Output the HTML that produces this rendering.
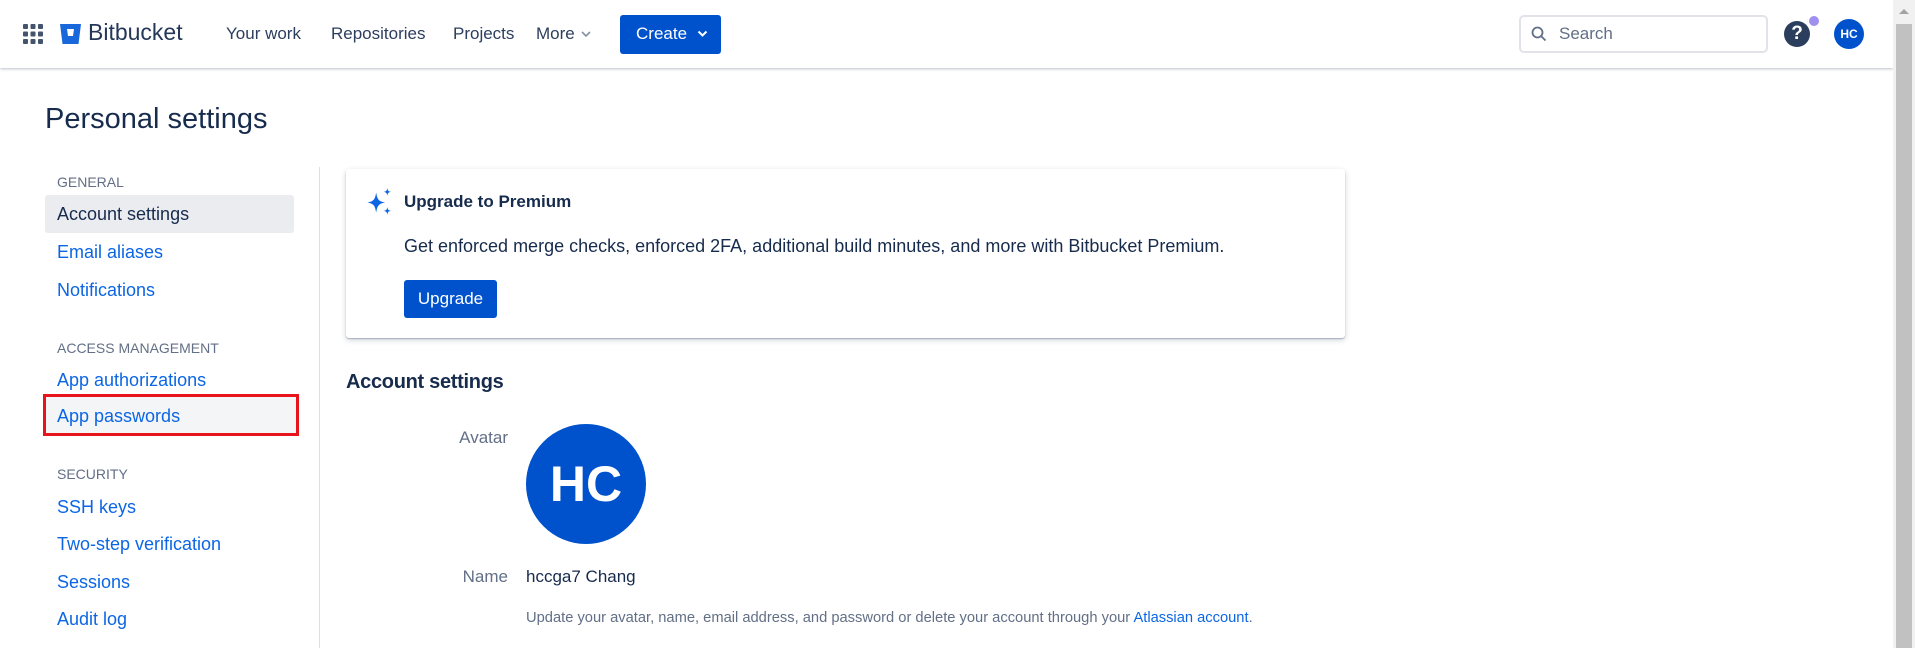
<!DOCTYPE html>
<html><head><meta charset="utf-8"><style>
*{box-sizing:border-box;margin:0;padding:0}
body{width:1915px;height:648px;overflow:hidden;background:#fff;font-family:"Liberation Sans",Arial,sans-serif;color:#172b4d;position:relative}
.a{position:absolute;white-space:nowrap}
.hdr{position:absolute;left:0;top:0;width:1893px;height:68px;background:#fff;box-shadow:0 1px 2px rgba(9,30,66,.2),0 2px 4px rgba(9,30,66,.06)}
.nav{font-size:17px;color:#2c3e5d;top:24px}
.side{font-size:18px;color:#0c66e4;left:57px}
.cap{font-size:14px;color:#626f86;left:57px;text-transform:uppercase}
.btn{background:#0052cc;color:#fff;border-radius:3px}
</style></head><body>
<div class="hdr"></div>
<svg class="a" style="left:23px;top:24px" width="20" height="20" viewBox="0 0 20 20" fill="#44546f"><g><rect x="0" y="0" width="5" height="5" rx="1"/><rect x="7.5" y="0" width="5" height="5" rx="1"/><rect x="15" y="0" width="5" height="5" rx="1"/><rect x="0" y="7.5" width="5" height="5" rx="1"/><rect x="7.5" y="7.5" width="5" height="5" rx="1"/><rect x="15" y="7.5" width="5" height="5" rx="1"/><rect x="0" y="15" width="5" height="5" rx="1"/><rect x="7.5" y="15" width="5" height="5" rx="1"/><rect x="15" y="15" width="5" height="5" rx="1"/></g></svg>
<svg class="a" style="left:60px;top:24px" width="21" height="20" viewBox="0 0 21 20"><path d="M0 0H21L18.5 20H2.5Z" fill="#1868db"/><path d="M7 5H14L13 12H8Z" fill="#fff"/></svg>
<div class="a" style="left:88px;top:19px;font-size:23px;color:#253858">Bitbucket</div>
<div class="a nav" style="left:226px">Your work</div>
<div class="a nav" style="left:331px">Repositories</div>
<div class="a nav" style="left:453px">Projects</div>
<div class="a nav" style="left:536px">More</div>
<svg class="a" style="left:581px;top:31px" width="10" height="7" viewBox="0 0 10 7"><path d="M1 1L5 5L9 1" stroke="#8590a2" stroke-width="1.6" fill="none"/></svg>
<div class="a btn" style="left:620px;top:15px;width:101px;height:39px"></div>
<div class="a" style="left:636px;top:24px;font-size:17px;color:#fff">Create</div>
<svg class="a" style="left:697px;top:30px" width="11" height="8" viewBox="0 0 11 8"><path d="M1.5 1.5L5.5 5.5L9.5 1.5" stroke="#fff" stroke-width="2" fill="none"/></svg>
<div class="a" style="left:1519px;top:15px;width:249px;height:38px;border:2px solid #e1e3e8;border-radius:5px"></div>
<svg class="a" style="left:1531px;top:26px" width="16" height="16" viewBox="0 0 16 16"><circle cx="6.5" cy="6.5" r="5" stroke="#626f86" stroke-width="1.8" fill="none"/><path d="M10.5 10.5L14.5 14.5" stroke="#626f86" stroke-width="1.8"/></svg>
<div class="a" style="left:1559px;top:24px;font-size:17px;color:#626f86">Search</div>
<div class="a" style="left:1784px;top:21px;width:26px;height:26px;border-radius:50%;background:#2c3e5d;color:#fff;font-weight:bold;font-size:19px;text-align:center;line-height:26px">?</div>
<div class="a" style="left:1808px;top:15px;width:12px;height:12px;border-radius:50%;background:#9f8fef;border:1px solid #fff"></div>
<div class="a" style="left:1834px;top:19px;width:30px;height:30px;border-radius:50%;background:#0052cc;color:#fff;font-weight:bold;font-size:12px;text-align:center;line-height:30px">HC</div>
<div class="a" style="left:1893px;top:0;width:22px;height:648px;background:#f1f1f1"></div>
<div class="a" style="left:1896px;top:24px;width:16px;height:624px;background:#c1c1c1"></div>
<svg class="a" style="left:1898px;top:7px" width="12" height="8" viewBox="0 0 12 8"><path d="M1 7L6 2L11 7Z" fill="#a3a3a3"/></svg>

<div class="a" style="left:45px;top:103px;font-size:29px;color:#172b4d">Personal settings</div>

<div class="a cap" style="top:174px">General</div>
<div class="a" style="left:45px;top:195px;width:249px;height:38px;background:#ebecf0;border-radius:3px"></div>
<div class="a side" style="top:204px;color:#172b4d">Account settings</div>
<div class="a side" style="top:242px">Email aliases</div>
<div class="a side" style="top:280px">Notifications</div>
<div class="a cap" style="top:340px">Access management</div>
<div class="a side" style="top:370px">App authorizations</div>
<div class="a" style="left:43px;top:394px;width:256px;height:42px;border:3px solid #e8141c;background:#f4f5f7"></div>
<div class="a side" style="top:406px">App passwords</div>
<div class="a cap" style="top:466px">Security</div>
<div class="a side" style="top:497px">SSH keys</div>
<div class="a side" style="top:534px">Two-step verification</div>
<div class="a side" style="top:572px">Sessions</div>
<div class="a side" style="top:609px">Audit log</div>
<div class="a" style="left:319px;top:167px;width:1px;height:481px;background:#dcdfe4"></div>

<div class="a" style="left:346px;top:169px;width:999px;height:169px;border-radius:3px;box-shadow:0 1px 1px rgba(9,30,66,.25),0 2px 6px rgba(9,30,66,.2)"></div>
<svg class="a" style="left:365px;top:188px" width="29" height="29" viewBox="0 0 26 26" fill="#0c66e4"><path d="M10 4C11 10 12 12 18 13C12 14 11 16 10 22C9 16 8 14 2 13C8 12 9 10 10 4Z"/><path d="M20 0C20.4 2.5 21 3.2 23.5 3.5C21 3.8 20.4 4.5 20 7C19.6 4.5 19 3.8 16.5 3.5C19 3.2 19.6 2.5 20 0Z"/><path d="M20 17C20.4 19.5 21 20.2 23.5 20.5C21 20.8 20.4 21.5 20 24C19.6 21.5 19 20.8 16.5 20.5C19 20.2 19.6 19.5 20 17Z"/></svg>
<div class="a" style="left:404px;top:192px;font-size:17px;font-weight:bold;color:#172b4d">Upgrade to Premium</div>
<div class="a" style="left:404px;top:236px;font-size:18px;color:#172b4d">Get enforced merge checks, enforced 2FA, additional build minutes, and more with Bitbucket Premium.</div>
<div class="a btn" style="left:404px;top:280px;width:93px;height:38px"></div>
<div class="a" style="left:404px;top:289px;width:93px;text-align:center;font-size:17px;color:#fff">Upgrade</div>

<div class="a" style="left:346px;top:371px;font-size:20px;font-weight:bold;color:#172b4d;letter-spacing:-0.3px">Account settings</div>
<div class="a" style="left:400px;top:428px;width:108px;text-align:right;font-size:17px;color:#626f86">Avatar</div>
<div class="a" style="left:526px;top:424px;width:120px;height:120px;border-radius:50%;background:#0052cc;color:#fff;font-weight:bold;font-size:50px;text-align:center;line-height:120px">HC</div>
<div class="a" style="left:400px;top:567px;width:108px;text-align:right;font-size:17px;color:#626f86">Name</div>
<div class="a" style="left:526px;top:567px;font-size:17px;color:#172b4d">hccga7 Chang</div>
<div class="a" style="left:526px;top:610px;font-size:14.7px;color:#626f86">Update your avatar, name, email address, and password or delete your account through your <span style="color:#0c66e4">Atlassian account</span>.</div>
</body></html>
